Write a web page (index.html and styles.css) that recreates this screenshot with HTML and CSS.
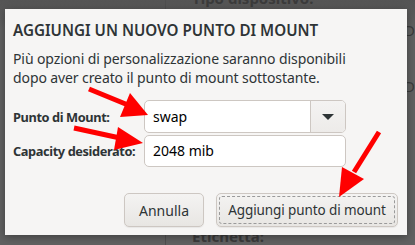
FILE: index.html
```html
<!DOCTYPE html>
<html lang="it">
<head>
<meta charset="utf-8">
<link rel="stylesheet" href="styles.css">
</head>
<body>
<div class="backdrop">
  <div class="pane-left"></div>
  <div class="pane-right">
    <div class="bg-label bg-top">Tipo dispositivo:</div>
    <div class="bg-side bg-side1">Descrip</div>
    <div class="bg-side bg-side2">Descrittore</div>
    <div class="bg-label bg-bottom">Etichetta:</div>
  </div>
</div>

<div class="dialog">
  <h1 class="title">AGGIUNGI UN NUOVO PUNTO DI MOUNT</h1>
  <p class="desc">Più opzioni di personalizzazione saranno disponibili<br>dopo aver creato il punto di mount sottostante.</p>
  <div class="form">
    <label class="lbl">Punto di Mount:</label>
    <div class="combo">
      <span class="combo-text">swap</span>
      <span class="combo-btn"><span class="tri"></span></span>
    </div>
    <label class="lbl">Capacity desiderato:</label>
    <div class="entry">2048 mib</div>
  </div>
  <div class="actions">
    <button class="btn">Annulla</button>
    <button class="btn btn-focus"><span class="focus-ring">Aggiungi punto di mount</span></button>
  </div>
</div>

<svg class="arrows" width="415" height="245" viewBox="0 0 415 245">
  <g fill="#ff0000" stroke="#ff0000">
    <line x1="89" y1="89" x2="128" y2="105" stroke-width="5"/>
    <polygon points="148,115 120,117 130,93" stroke="none"/>
    <line x1="74" y1="128" x2="120" y2="138" stroke-width="5"/>
    <polygon points="143,143 114,150 118,127" stroke="none"/>
    <line x1="379" y1="132" x2="354" y2="172" stroke-width="5"/>
    <polygon points="339,197 342,167 364,179" stroke="none"/>
  </g>
</svg>
</body>
</html>
```

FILE: styles.css
```css
* { box-sizing: border-box; }
html, body { margin: 0; padding: 0; }
body {
  width: 415px;
  height: 245px;
  overflow: hidden;
  position: relative;
  font-family: "Noto Sans", "DejaVu Sans", sans-serif;
  background: #5f5f5f;
}
.backdrop {
  display: flex;
  width: 415px;
  height: 245px;
  overflow: hidden;
  background: linear-gradient(#545454, #616161 30px, #616161);
}
.pane-left {
  width: 166px;
  border-right: 1px solid #4f4f4f;
}
.pane-right {
  flex: 1;
  position: relative;
  overflow: hidden;
  color: #3b3b3b;
  font-size: 15px;
  white-space: nowrap;
}
.bg-label { position: absolute; left: 26px; font-weight: bold; }
.bg-top { top: -12px; }
.bg-bottom { top: 226px; }
.bg-side { position: absolute; left: 238px; }
.bg-side1 { top: 20px; }
.bg-side2 { top: 76px; }

.dialog {
  position: absolute;
  left: 5px;
  top: 9px;
  width: 402px;
  height: 226px;
  background: #f6f5f4;
  color: #2e3436;
  padding: 8px 9px 8px 8px;
  display: flex;
  flex-direction: column;
  box-shadow: 0 2px 8px rgba(0,0,0,0.35);
}
.title {
  margin: 0;
  font-size: 15.2px;
  font-weight: 600;
  line-height: 26px;
  height: 26px;
  white-space: nowrap;
}
.desc {
  margin: 6px 0 0 0;
  font-size: 14px;
  line-height: 19px;
  letter-spacing: -0.1px;
}
.form {
  margin-top: 13px;
  display: grid;
  grid-template-columns: 131px 202px;
  row-gap: 2px;
  align-items: center;
}
.lbl {
  font-size: 12.8px;
  font-weight: bold;
  letter-spacing: -0.4px;
  white-space: nowrap;
  color: #2e3436;
}
.combo {
  height: 33px;
  display: flex;
  background: #ffffff;
  border: 1px solid #cdc7c2;
  border-radius: 5px;
  overflow: hidden;
}
.combo-text {
  flex: 1;
  font-size: 14px;
  line-height: 31px;
  padding-left: 8px;
  color: #000;
}
.combo-btn {
  width: 35px;
  border-left: 1px solid #cdc7c2;
  background: linear-gradient(#f4f3f2, #edebe9);
  display: flex;
  align-items: center;
  justify-content: center;
}
.tri {
  width: 0;
  height: 0;
  border-left: 6px solid transparent;
  border-right: 6px solid transparent;
  border-top: 6px solid #2e3436;
}
.entry {
  height: 32px;
  background: #ffffff;
  border: 1px solid #cdc7c2;
  border-radius: 5px;
  font-size: 14px;
  line-height: 30px;
  padding-left: 8px;
  color: #000;
}
.actions {
  margin-top: auto;
  display: flex;
  justify-content: flex-end;
  gap: 12px;
}
.btn {
  height: 34px;
  font-family: inherit;
  font-size: 14px;
  color: #2e3436;
  background: linear-gradient(#f4f3f2, #e8e6e3);
  border: 1px solid #cdc7c2;
  border-radius: 5px;
  box-shadow: 0 1px 1px rgba(0,0,0,0.06);
  padding: 0 16px;
}
.btn:first-child { width: 80px; padding: 0; }
.btn-focus {
  width: 182px;
  padding: 2px;
  font-size: 13.5px;
  letter-spacing: -0.1px;
}
.focus-ring {
  display: flex;
  align-items: center;
  justify-content: center;
  height: 100%;
  border: 1px dashed #9a9a9a;
  border-radius: 3px;
  white-space: nowrap;
}
.arrows {
  position: absolute;
  left: 0;
  top: 0;
}
```
